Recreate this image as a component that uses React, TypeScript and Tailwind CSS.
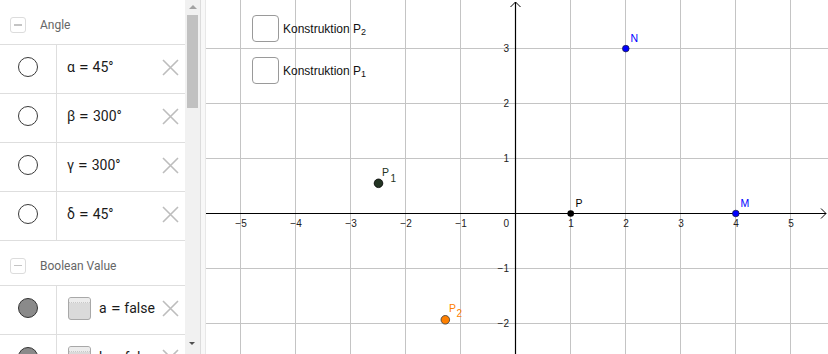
import React from 'react'

const sans = { fontFamily: 'Roboto, "Liberation Sans", sans-serif' }

function XIcon() {
  return (
    <svg width="17" height="17" viewBox="0 0 17 17" className="shrink-0">
      <path d="M1 1 L16 16 M16 1 L1 16" stroke="#bdbdbd" strokeWidth="1.6" />
    </svg>
  )
}

function Header({ label, top }: { label: string; top: string }) {
  return (
    <div className={`flex h-[45px] shrink-0 items-center border-b border-[#dedede] pl-[10px] ${top}`}>
      <div className="flex h-[16px] w-[16px] items-center justify-center rounded-[3px] border border-[#dcdcdc]">
        <div className="h-[1.5px] w-[8px] bg-[#c4c4c4]" />
      </div>
      <span className="ml-[14px] text-[12px] text-[#666]">{label}</span>
    </div>
  )
}

// name = value, with the wider math spacing round "="
function Eq({ name, value }: { name: string; value: string }) {
  return (
    <span className="text-[14px] text-[#1a1a1a]">
      {name}
      <span className="mx-[5px] inline-block scale-x-125">=</span>
      {value}
    </span>
  )
}

function AngleRow({ name, value }: { name: string; value: string }) {
  return (
    <div className="flex h-[49px] shrink-0 border-b border-[#dedede]">
      <div className="flex w-[57px] shrink-0 items-center justify-center border-r border-[#dedede] pb-[4px]">
        <div className="h-[20px] w-[20px] rounded-full border-[1.5px] border-[#3a3a3a]" />
      </div>
      <div className="flex flex-1 items-center justify-between pb-[4px] pl-[10px] pr-[6px]">
        <Eq name={name} value={value} />
        <XIcon />
      </div>
    </div>
  )
}

function BoolRow({ name, value }: { name: string; value: string }) {
  return (
    <div className="flex h-[49px] shrink-0 border-b border-[#dedede]">
      <div className="flex w-[57px] shrink-0 items-center justify-center border-r border-[#dedede] pb-[4px]">
        <div className="h-[20px] w-[20px] rounded-full border-[1.5px] border-[#333] bg-[#8a8a8a]" />
      </div>
      <div className="flex flex-1 items-center justify-between pb-[4px] pl-[11px] pr-[6px]">
        <div className="flex items-center">
          <div className="h-[23px] w-[23px] overflow-hidden rounded-[3px] border border-[#a8a8a8] bg-[#dadada]">
            <div className="h-[5px] border-b border-dotted border-[#c8c8c8] bg-[#ececec]" />
          </div>
          <span className="ml-[8px]">
            <Eq name={name} value={value} />
          </span>
        </div>
        <XIcon />
      </div>
    </div>
  )
}

function GraphCheck({ label, sub }: { label: string; sub: string }) {
  return (
    <div className="flex items-center" style={{ fontFamily: '"Liberation Sans", Arial, sans-serif' }}>
      <div className="h-[27px] w-[27px] rounded-[4px] border-[1.5px] border-[#9a9a9a] bg-white" />
      <span className="ml-[4px] text-[12px] text-[#111]">
        {label}
        <sub className="text-[9px]">{sub}</sub>
      </span>
    </div>
  )
}

const vx = [240, 295, 350, 405, 460, 570, 625, 680, 735, 790]
const hy = [48, 103, 158, 268, 323]
const xLabels = [
  { t: '−5', x: 241 },
  { t: '−4', x: 296 },
  { t: '−3', x: 351 },
  { t: '−2', x: 406 },
  { t: '−1', x: 461 },
  { t: '1', x: 571 },
  { t: '2', x: 626 },
  { t: '3', x: 681 },
  { t: '4', x: 736 },
  { t: '5', x: 791 },
]
const yLabels = [
  { t: '3', y: 52 },
  { t: '2', y: 107 },
  { t: '1', y: 162 },
  { t: '−1', y: 272 },
  { t: '−2', y: 327 },
]

function Graphics() {
  return (
    <svg className="absolute inset-0" width="622" height="354" viewBox="206 0 622 354" style={{ fontFamily: '"Liberation Sans", Arial, sans-serif' }}>
      {vx.map((x) => (
        <line key={'v' + x} x1={x + 0.5} y1={0} x2={x + 0.5} y2={354} stroke="#c4c4c4" strokeWidth="1" />
      ))}
      {hy.map((y) => (
        <line key={'h' + y} x1={206} y1={y + 0.5} x2={828} y2={y + 0.5} stroke="#c4c4c4" strokeWidth="1" />
      ))}
      {/* axes */}
      <line x1={206} y1={213.5} x2={826} y2={213.5} stroke="#000" strokeWidth="1.2" />
      <line x1={515.5} y1={2} x2={515.5} y2={354} stroke="#000" strokeWidth="1.2" />
      <path d="M821 208.5 L826 213.5 L821 218.5" fill="none" stroke="#000" strokeWidth="1" />
      <path d="M510.5 7 L515.5 2 L520.5 7" fill="none" stroke="#000" strokeWidth="1" />
      {xLabels.map((l) => (
        <text key={l.t} x={l.x} y={227} fontSize="10" textAnchor="middle" fill="#222">
          {l.t}
        </text>
      ))}
      <text x={509} y={227} fontSize="10" textAnchor="end" fill="#222">0</text>
      {yLabels.map((l) => (
        <text key={l.t} x={509} y={l.y} fontSize="10" textAnchor="end" fill="#222">
          {l.t}
        </text>
      ))}
      {/* points */}
      <circle cx={625.8} cy={48.6} r={3.3} fill="#0000ff" stroke="#1a1a4a" strokeWidth="0.8" />
      <text x={630.5} y={42} fontSize="10.5" fill="#0000ff">N</text>
      <circle cx={735.8} cy={213.5} r={3.3} fill="#0000ff" stroke="#1a1a4a" strokeWidth="0.8" />
      <text x={740.5} y={206.7} fontSize="10.5" fill="#0000ff">M</text>
      <circle cx={570.7} cy={213.5} r={3.3} fill="#000" />
      <text x={575.5} y={206.7} fontSize="10.5" fill="#000">P</text>
      <circle cx={378.5} cy={183.3} r={4.3} fill="#233423" stroke="#000" strokeWidth="0.8" />
      <text x={382} y={176} fontSize="10.5" fill="#233423">P</text>
      <text x={390.5} y={181.5} fontSize="10" fill="#233423">1</text>
      <circle cx={445.3} cy={319.8} r={4.3} fill="#ff8000" stroke="#333" strokeWidth="0.8" />
      <text x={449} y={311.7} fontSize="10.5" fill="#ff8000">P</text>
      <text x={456.5} y={317} fontSize="10" fill="#ff8000">2</text>
    </svg>
  )
}

export default function App() {
  return (
    <div className="flex h-[354px] w-[828px] overflow-hidden bg-white" style={sans}>
      {/* Algebra view */}
      <div className="flex w-[185px] shrink-0 flex-col overflow-hidden">
        <Header label="Angle" top="pt-[6px]" />
        <AngleRow name="α" value="45°" />
        <AngleRow name="β" value="300°" />
        <AngleRow name="γ" value="300°" />
        <AngleRow name="δ" value="45°" />
        <Header label="Boolean Value" top="pt-[5px]" />
        <BoolRow name="a" value="false" />
        <BoolRow name="b" value="false" />
      </div>

      {/* scrollbar */}
      <div className="relative w-[15px] shrink-0 bg-[#f1f1f1]">
        <div className="absolute left-[3.5px] top-[5px] h-0 w-0 border-x-[4px] border-b-[4px] border-x-transparent border-b-[#a3a3a3]" />
        <div className="absolute left-[2px] top-[15px] h-[93px] w-[11px] bg-[#c1c1c1]" />
        <div className="absolute bottom-[9px] left-[4px] h-0 w-0 border-x-[3.5px] border-t-[3.5px] border-x-transparent border-t-[#505050]" />
      </div>

      {/* splitter */}
      <div className="w-[6px] shrink-0 border-x border-l-[#dcdcdc] border-r-[#e8e8e8] bg-[#f8f8f8]" />

      {/* graphics view */}
      <div className="relative flex-1">
        <Graphics />
        <div className="absolute left-[46px] top-[15px] flex flex-col gap-[15px]">
          <GraphCheck label="Konstruktion P" sub="2" />
          <GraphCheck label="Konstruktion P" sub="1" />
        </div>
      </div>
    </div>
  )
}
